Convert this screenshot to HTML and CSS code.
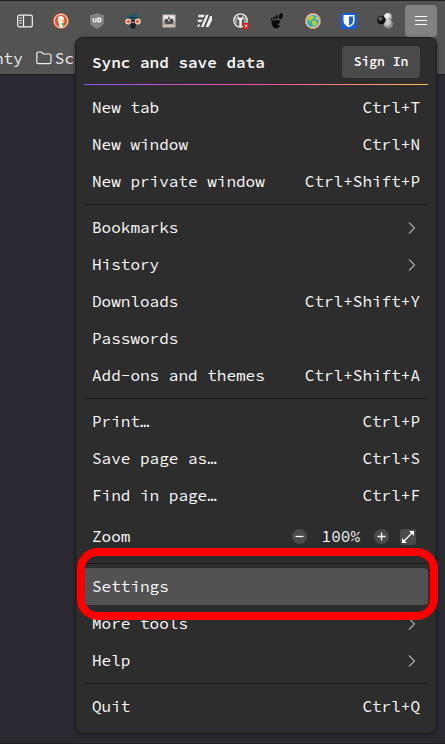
FILE: index.html
```html
<!DOCTYPE html>
<html lang="en">
<head>
<meta charset="utf-8">
<title>Application menu</title>
<link rel="stylesheet" href="styles.css">
</head>
<body>
<div class="window">
  <header class="chrome">
    <div class="toolbar">
      <div class="tool"><svg width="16" height="16" viewBox="0 0 16 16" fill="none" stroke="#f4f4f4" stroke-width="1.2"><rect x=".7" y="2.2" width="14.6" height="11.6" rx="1.6"/><path d="M6.5 2.2v11.6M2.3 5h2.5M2.3 7.5h2.5M2.3 10h2.5"/></svg></div>
      <div class="tool"><svg width="16" height="16" viewBox="0 0 16 16"><circle cx="8" cy="8" r="8" fill="#de5833"/><circle cx="8" cy="8" r="6.7" fill="none" stroke="#fff" stroke-width=".9"/><path d="M6.7 14 5 6.7C4.5 4 6 2.8 8 3.1c2.3.2 3.1 1.800 2.800 4.200l-.5 3-.6 3.800z" fill="#fff"/><path d="M8 7.500c1.200-.7 3.500-.5 3.800.1-.5.8-2 1.100-3.800 1.100z" fill="#fbbd13"/><path d="m8.200 10 3.200.2-.2 2.400-2.400-.7z" fill="#4caf40"/><circle cx="7" cy="6" r=".6" fill="#265078"/></svg></div>
      <div class="tool"><svg width="16" height="16" viewBox="0 0 16 16"><path d="M8 0c2 1.200 4 1.700 7 1.800V8c0 4-2.800 6.200-7 8-4.200-1.800-7-4-7-8V1.800C4 1.700 6 1.200 8 0z" fill="#828282"/><path d="M4.200 5v2.800c0 1.600 2.800 1.600 2.800 0V5M9 5.200v3.600h.8c2.700 0 2.700-3.600 0-3.600z" fill="none" stroke="#fff" stroke-width="1.200"/></svg></div>
      <div class="tool"><svg width="16" height="16" viewBox="0 0 16 16"><path d="M1.500 7C1.500 3 3.500 1 7.500 1L12 .3l1.500 3.700.8 4-3.300 3H4z" fill="#245b6c"/><path d="m5 8 3-1.500L11 8l-.5 7L8 16l-2.500-1z" fill="#18222b"/><path d="M2 6c3-2 9-2 12 0" fill="none" stroke="#1b2f3a" stroke-width="1.400"/><circle cx="3.300" cy="8.500" r="3" fill="#f7e6dc"/><circle cx="12.700" cy="8.500" r="3" fill="#f7e6dc"/><circle cx="3.600" cy="8.600" r="2" fill="#ef6340"/><circle cx="12.400" cy="8.600" r="2" fill="#ef6340"/><path d="M6.500 10 8 8.800l1.500 1.200z" fill="#eee"/></svg></div>
      <div class="tool"><svg width="16" height="16" viewBox="0 0 16 16"><rect x="1.500" y="1.500" width="13" height="13" fill="#c9bdb7"/><path d="M2.500 2.500h11v7h-11z" fill="#ece8e5"/><path d="M2 9.500h12v2H2z" fill="#9d918c"/><path d="m8 3 1.200 3 2.500-.5L13 9l-2.500 2h-5L3 9l1-3 2.500.3z" fill="#4b4b4b"/><path d="m8 5.500 1 1.500L8 9 7 7z" fill="#ddd"/></svg></div>
      <div class="tool"><svg width="16" height="16" viewBox="0 0 16 16" fill="#eee"><path d="M1.500 1.800h6.300L6.500 4.200H1.200zM1 6.700h4.600L4.400 9.100H.7zM.8 11.500h2.500L2 14H.5zM9.200 1.800h2.500L6.500 14H4zM13.200 3h1.800v4.200L11.500 14H8.700z"/></svg></div>
      <div class="tool"><svg width="16" height="16" viewBox="0 0 16 16"><circle cx="7.500" cy="7.500" r="6.700" fill="#5a5a5a" stroke="#f0f0f0" stroke-width="1.300"/><path d="M4.500 2v4l1.800 1.200V14h2.400V7.200L10.500 6V2L8.800 4.800H6.200z" fill="#f4f4f4"/><path d="M3 4.500v6M12 4.500v6" stroke="#ddd"/><path d="M10 10h6v6h-6z" fill="#f0100d"/><path d="m11.500 11.500 3 3m0-3-3 3" stroke="#fff"/></svg></div>
      <div class="tool"><svg width="16" height="16" viewBox="0 0 16 16" fill="#080808"><path d="M3 8.200c3-1.600 8-2 8.300.3.200 1.600-2.800 1.800-2.600 3.200.2 1 1.800-.2 2 .9.200 1.500-1.500 2.700-3.500 2.700C4 15.300 1.700 10.500 3 8.200z"/><ellipse cx="11.800" cy="3.200" rx="1.900" ry="3" transform="rotate(22 11.800 3.200)"/><ellipse cx="7.600" cy="3.900" rx="1.100" ry="1.900"/><ellipse cx="5" cy="5" rx=".9" ry="1.600" transform="rotate(-12 5 5)"/><ellipse cx="2.700" cy="6.600" rx=".8" ry="1.300" transform="rotate(-22 2.700 6.600)"/></svg></div>
      <div class="tool"><svg width="16" height="16" viewBox="0 0 16 16"><circle cx="8" cy="8" r="7" fill="#31afbb" stroke="#f8eee5" stroke-width="1.400"/><circle cx="8" cy="8" r="7.500" fill="none" stroke="#e57742"/><path d="m3 5 3-2.500 3 .8-.5 2.200-2 1.500L5 8 2.500 7zM6.500 8l3-.5 2.800 1.800-1 2.700-2.800 1.800-1-2.800z" fill="#c6cb2b"/><path d="m10.500 3.500 2.700 2-.7 2-2-1.500z" fill="#e1cf36"/></svg></div>
      <div class="tool"><svg width="16" height="16" viewBox="0 0 16 16"><rect width="16" height="16" rx="2.500" fill="#175ddc"/><path d="M2.500 2h11v6c0 3-2.500 4.800-5.500 6.300C5 12.800 2.500 11 2.500 8z" fill="#fff"/><path d="M8 3.600h4V8c0 2-1.700 3.500-4 4.700z" fill="#175ddc"/></svg></div>
      <div class="tool"><svg width="16" height="16" viewBox="0 0 16 16"><defs><radialGradient id="dark" cx=".4" cy=".35"><stop stop-color="#aaa"/><stop offset=".4" stop-color="#333"/><stop offset="1" stop-color="#080808"/></radialGradient><radialGradient id="light" cx=".4" cy=".35"><stop stop-color="#fff"/><stop offset=".6" stop-color="#ddd"/><stop offset="1" stop-color="#999"/></radialGradient></defs><circle cx="11" cy="4" r="4.200" fill="url(#light)"/><circle cx="11.300" cy="11" r="4.700" fill="url(#light)" opacity=".75"/><circle cx="4.300" cy="7" r="4.300" fill="url(#dark)"/></svg></div>
      <div class="tool tool-open"><svg width="12" height="12" viewBox="0 0 12 12" stroke="#fafafa"><path d="M0 1.500h12M0 5.500h12M0 9.500h12"/></svg></div>
    </div>
    <div class="bookmarks">
      <span>nty</span>
      <svg width="16" height="16" viewBox="0 0 16 16" fill="none" stroke="#eee" stroke-width="1.200"><path d="M.8 12V3.700C.8 2.700 1.400 2 2.400 2h3l2 2h6c1 0 1.600.7 1.600 1.600V12c0 1-.6 1.600-1.600 1.600h-11C1.400 13.600.8 13 .8 12z"/></svg>
      <span class="folder-name">Sc</span>
    </div>
  </header>

  <nav class="menu">
    <div class="sync"><span>Sync and save data</span><button class="sign-in">Sign In</button></div>
    <div class="rainbow"></div>
    <div class="row"><span>New tab</span><span>Ctrl+T</span></div>
    <div class="row"><span>New window</span><span>Ctrl+N</span></div>
    <div class="row"><span>New private window</span><span>Ctrl+Shift+P</span></div>
    <hr>
    <div class="row"><span>Bookmarks</span><svg class="chevron" viewBox="0 0 8 12"><path d="m1 .5 5.500 5.500L1 11.500"/></svg></div>
    <div class="row"><span>History</span><svg class="chevron" viewBox="0 0 8 12"><path d="m1 .5 5.500 5.500L1 11.500"/></svg></div>
    <div class="row"><span>Downloads</span><span>Ctrl+Shift+Y</span></div>
    <div class="row"><span>Passwords</span></div>
    <div class="row"><span>Add-ons and themes</span><span>Ctrl+Shift+A</span></div>
    <hr>
    <div class="row"><span>Print…</span><span>Ctrl+P</span></div>
    <div class="row"><span>Save page as…</span><span>Ctrl+S</span></div>
    <div class="row"><span>Find in page…</span><span>Ctrl+F</span></div>
    <div class="row zoom-row"><span>Zoom</span>
      <div class="zoom">
        <svg width="15" height="15" viewBox="0 0 15 15"><circle cx="7.500" cy="7.500" r="7.500" fill="#4a4a4a"/><path d="M3.500 7.500h8" stroke="#fff" stroke-width="1.300"/></svg>
        <span class="percent">100%</span>
        <svg width="15" height="15" viewBox="0 0 15 15"><circle cx="7.500" cy="7.500" r="7.500" fill="#4a4a4a"/><path d="M3.500 7.500h8M7.500 3.500v8" stroke="#fff" stroke-width="1.300"/></svg>
        <svg class="fullscreen" width="16" height="16" viewBox="0 0 16 16"><rect width="16" height="16" rx="2" fill="#4a4a4a"/><path d="m4 12 8-8" stroke="#fff" stroke-width="1.300"/><path d="M9 2h5v5zM2 9v5h5z" fill="#fff"/></svg>
      </div>
    </div>
    <hr>
    <div class="row selected"><span>Settings</span><div class="highlight"></div></div>
    <div class="row"><span>More tools</span><svg class="chevron" viewBox="0 0 8 12"><path d="m1 .5 5.500 5.500L1 11.500"/></svg></div>
    <div class="row"><span>Help</span><svg class="chevron" viewBox="0 0 8 12"><path d="m1 .5 5.500 5.500L1 11.500"/></svg></div>
    <hr>
    <div class="row"><span>Quit</span><span>Ctrl+Q</span></div>
  </nav>
</div>
</body>
</html>
```
FILE: styles.css
```css
* { box-sizing: border-box; }
body {
  margin: 0;
  background: #2b2a33;
  color: #fbfbfb;
  font: 16px/20px "Source Code Pro", "DejaVu Sans Mono", monospace;
}
.window { position: relative; height: 744px; overflow: hidden; border-bottom: 1px solid #241c24; }
.chrome { height: 75px; background: #535353; border-top: 1px solid #202020; border-bottom: 1px solid #1d1d1f; }
.toolbar { height: 40px; padding: 4px 8px 0 0; display: flex; justify-content: flex-end; gap: 4px; }
.tool { width: 32px; height: 32px; flex: none; display: flex; align-items: center; justify-content: center; }
.tool-open { background: #828280; border-radius: 4px; }
.bookmarks { display: flex; align-items: center; height: 33px; margin-left: -6px; color: #eee; }
.bookmarks svg { margin-left: 13px; }
.folder-name { margin-left: 3px; }

.menu {
  position: absolute;
  left: 75px;
  top: 37px;
  width: 362px;
  height: 697px;
  padding: 0 8px;
  background: #2d2d2d;
  border: 1px solid #1b1b1b;
  border-radius: 8px;
  box-shadow: 0 1px 4px #0005;
}
.sync { height: 46px; padding: 2px 8px 0; display: flex; align-items: center; justify-content: space-between; font-weight: 600; }
.sign-in {
  width: 78px;
  height: 32px;
  padding: 0;
  border: 0;
  border-radius: 4px;
  background: #4a4a4a;
  color: #fbfbfb;
  font: 600 13px/32px "Source Code Pro", "DejaVu Sans Mono", monospace;
}
.rainbow { height: 1px; margin-bottom: 4px; background: linear-gradient(90deg, #9059ff, #ff4aa2 52%, #ffbd4f); }
.row { height: 37px; padding: 0 8px; display: flex; align-items: center; justify-content: space-between; white-space: nowrap; }
.row span { padding-bottom: 2px; }
hr { height: 1px; margin: 4px 0; border: 0; background: #1b1b1b; }
.chevron { width: 8px; height: 12px; margin-right: 4px; fill: none; stroke: #a8a8a8; stroke-width: 1.2; }
.zoom-row { height: 45px; }
.zoom { display: flex; align-items: center; margin-right: 4px; }
.percent { margin: 0 14px 0 15px; }
.fullscreen { margin-left: 11px; }
.selected { position: relative; background: #525252; border-radius: 4px; }
.highlight {
  position: absolute;
  z-index: 1;
  left: -7px;
  top: -20px;
  width: 361px;
  height: 72px;
  border: 8px solid #f00;
  border-radius: 21px;
}
```
